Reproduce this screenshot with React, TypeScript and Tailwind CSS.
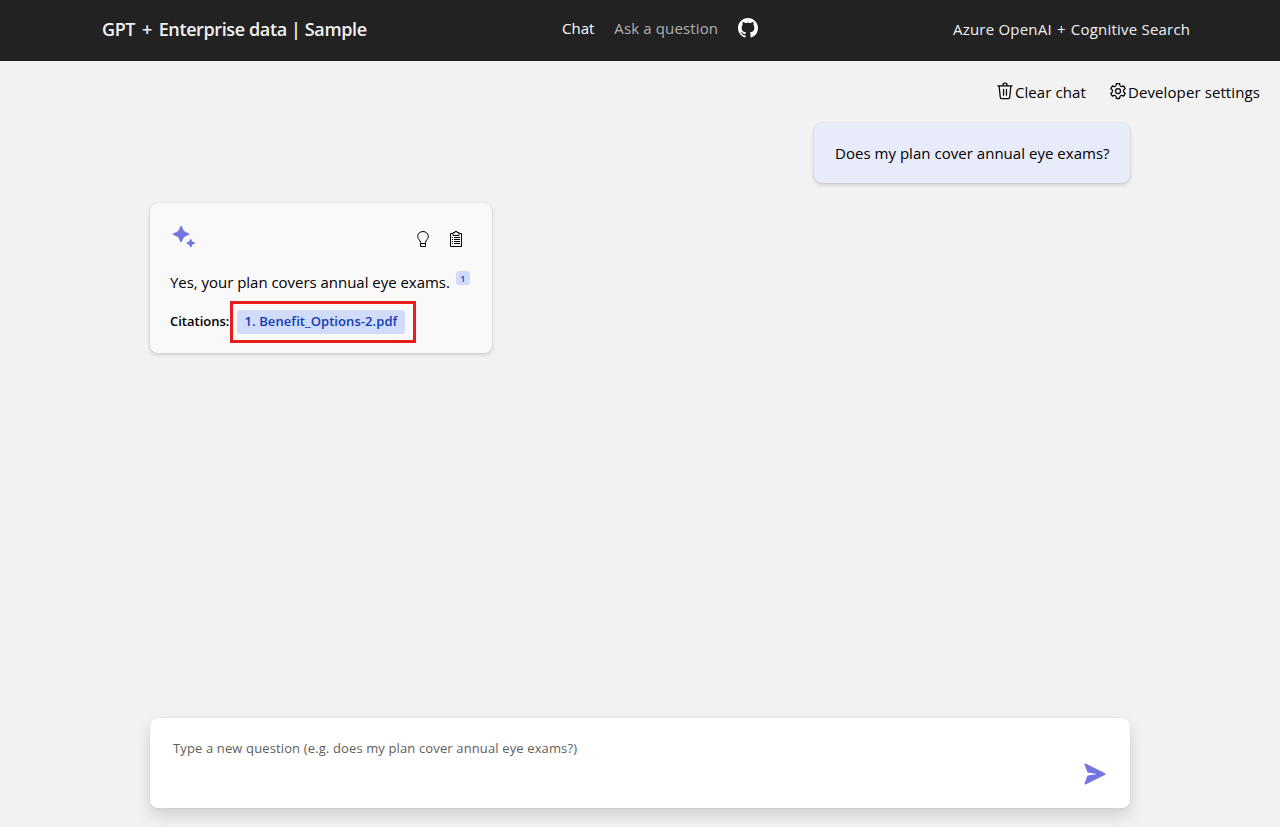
import type { ReactNode } from "react";

type IconProps = { className?: string };

function GithubIcon({ className }: IconProps) {
  return (
    <svg viewBox="0 0 16 16" fill="currentColor" className={className}>
      <path d="M8 0C3.58 0 0 3.58 0 8c0 3.54 2.29 6.53 5.47 7.59.4.07.55-.17.55-.38 0-.19-.01-.82-.01-1.49-2.01.37-2.53-.49-2.69-.94-.09-.23-.48-.94-.82-1.13-.28-.15-.68-.52-.01-.53.63-.01 1.08.58 1.23.82.72 1.21 1.87.87 2.33.66.07-.52.28-.87.51-1.07-1.78-.2-3.64-.89-3.64-3.95 0-.87.31-1.59.82-2.15-.08-.2-.36-1.02.08-2.12 0 0 .67-.21 2.2.82.64-.18 1.32-.27 2-.27s1.36.09 2 .27c1.53-1.04 2.2-.82 2.2-.82.44 1.1.16 1.92.08 2.12.51.56.82 1.27.82 2.15 0 3.07-1.87 3.75-3.65 3.95.29.25.54.73.54 1.48 0 1.07-.01 1.93-.01 2.2 0 .21.15.46.55.38A8.01 8.01 0 0 0 16 8c0-4.42-3.58-8-8-8Z" />
    </svg>
  );
}

function TrashIcon({ className }: IconProps) {
  return (
    <svg viewBox="0 0 24 24" fill="currentColor" className={className}>
      <path d="M12 1.75a3.25 3.25 0 0 1 3.245 3.066L15.25 5h5.25a.75.75 0 0 1 .102 1.493L20.5 6.5h-.796l-1.28 13.02a2.75 2.75 0 0 1-2.561 2.474l-.176.006H8.313a2.75 2.75 0 0 1-2.714-2.307l-.023-.174L4.295 6.5H3.5a.75.75 0 0 1-.743-.648L2.75 5.75a.75.75 0 0 1 .648-.743L3.5 5h5.25A3.25 3.25 0 0 1 12 1.75Zm6.197 4.75H5.802l1.267 12.872a1.25 1.25 0 0 0 1.117 1.122l.127.006h7.374c.6 0 1.109-.425 1.225-1.002l.02-.126L18.197 6.5ZM13.75 9.25a.75.75 0 0 1 .743.648L14.5 10v7a.75.75 0 0 1-1.493.102L13 17v-7a.75.75 0 0 1 .75-.75Zm-3.5 0a.75.75 0 0 1 .743.648L11 10v7a.75.75 0 0 1-1.493.102L9.5 17v-7a.75.75 0 0 1 .75-.75ZM12 3.25a1.75 1.75 0 0 0-1.744 1.606L10.25 5h3.5A1.75 1.75 0 0 0 12 3.25Z" />
    </svg>
  );
}

function GearIcon({ className }: IconProps) {
  return (
    <svg viewBox="0 0 24 24" fill="currentColor" className={className}>
      <path d="M12.012 2.25c.734.008 1.465.093 2.182.253a.75.75 0 0 1 .582.649l.17 1.527a1.384 1.384 0 0 0 1.927 1.116l1.401-.615a.75.75 0 0 1 .85.174 9.792 9.792 0 0 1 2.204 3.792.75.75 0 0 1-.271.825l-1.242.916a1.381 1.381 0 0 0 0 2.226l1.243.915a.75.75 0 0 1 .272.826 9.797 9.797 0 0 1-2.204 3.792.75.75 0 0 1-.848.175l-1.407-.617a1.38 1.38 0 0 0-1.926 1.114l-.169 1.526a.75.75 0 0 1-.572.647 9.518 9.518 0 0 1-4.406 0 .75.75 0 0 1-.572-.647l-.168-1.524a1.382 1.382 0 0 0-1.926-1.11l-1.406.616a.75.75 0 0 1-.849-.175 9.798 9.798 0 0 1-2.204-3.796.75.75 0 0 1 .272-.826l1.243-.916a1.38 1.38 0 0 0 0-2.226l-1.243-.914a.75.75 0 0 1-.271-.826 9.793 9.793 0 0 1 2.204-3.792.75.75 0 0 1 .85-.174l1.4.615a1.387 1.387 0 0 0 1.93-1.118l.17-1.526a.75.75 0 0 1 .583-.65c.717-.159 1.45-.243 2.201-.252Zm0 1.5a9.135 9.135 0 0 0-1.354.117l-.109.977A2.886 2.886 0 0 1 6.525 7.17l-.898-.394a8.293 8.293 0 0 0-1.348 2.317l.798.587a2.881 2.881 0 0 1 0 4.643l-.799.588c.32.842.776 1.626 1.348 2.322l.905-.397a2.882 2.882 0 0 1 4.017 2.318l.11.984c.889.15 1.798.15 2.687 0l.11-.984a2.881 2.881 0 0 1 4.018-2.322l.905.396a8.296 8.296 0 0 0 1.347-2.318l-.798-.588a2.881 2.881 0 0 1 0-4.643l.796-.587a8.293 8.293 0 0 0-1.348-2.317l-.896.392a2.884 2.884 0 0 1-4.023-2.324l-.11-.976a8.988 8.988 0 0 0-1.333-.117ZM12 8.25a3.75 3.75 0 1 1 0 7.5 3.75 3.75 0 0 1 0-7.5Zm0 1.5a2.25 2.25 0 1 0 0 4.5 2.25 2.25 0 0 0 0-4.5Z" />
    </svg>
  );
}

function SparkleIcon({ className }: IconProps) {
  return (
    <svg viewBox="0 0 24 24" fill="currentColor" className={className}>
      <path d="M8.2 1.6c.3-.9 1.5-.9 1.8 0l.9 2.4a5 5 0 0 0 3.300 3.300l2.400.900c.9.3.9 1.500 0 1.800l-2.400.900a5 5 0 0 0-3.300 3.300l-.9 2.400c-.3.9-1.5.9-1.8 0l-.9-2.400a5 5 0 0 0-3.300-3.300l-2.400-.900c-.9-.3-.9-1.500 0-1.800l2.400-.900a5 5 0 0 0 3.300-3.300Z" />
      <path d="M17.900 14.500c.2-.8 1.400-.8 1.600 0l.4 1.200c.2.6.6 1 1.200 1.200l1.200.4c.8.2.8 1.400 0 1.600l-1.200.4c-.6.2-1 .6-1.200 1.200l-.4 1.200c-.2.8-1.400.8-1.600 0l-.4-1.200c-.2-.6-.6-1-1.200-1.200l-1.200-.4c-.8-.2-.8-1.400 0-1.600l1.200-.4c.6-.2 1-.6 1.200-1.200Z" />
    </svg>
  );
}

function BulbIcon({ className }: IconProps) {
  return (
    <svg viewBox="0 0 16 16" fill="none" stroke="currentColor" className={className}>
      <path d="M5.5 12.500V11.500C5.500 9.200 2.700 8.300 2.700 5.500a5.300 5.000 0 0 1 10.600 0C13.300 8.300 10.500 9.200 10.500 11.500v4h-5v-3h5" />
    </svg>
  );
}

function ClipboardIcon({ className }: IconProps) {
  return (
    <svg viewBox="0 0 16 16" fill="none" stroke="currentColor" className={className}>
      <path d="M5 2.500H2.500v13h11v-13H11M5 4.500v-3h2V.500h2v1h2v3zM4 6.500h1M6 6.500h6M4 8.500h1M6 8.500h6M4 10.500h1M6 10.500h6M4 12.500h1M6 12.500h6" />
    </svg>
  );
}

function SendIcon({ className }: IconProps) {
  return (
    <svg viewBox="0 0 24 24" fill="currentColor" className={className}>
      <path d="m12.815 12.197-7.532 1.256a.5.5 0 0 0-.386.318L2.3 20.728c-.248.64.421 1.25 1.035.943l18-9a.75.75 0 0 0 0-1.342l-18-9c-.614-.307-1.283.303-1.035.943l2.598 6.957a.5.5 0 0 0 .386.318l7.532 1.255a.2.2 0 0 1 0 .395Z" />
    </svg>
  );
}

function ActionButton({ icon, children }: { icon: ReactNode; children: ReactNode }) {
  return (
    <button className="flex items-center whitespace-nowrap text-[15px] leading-5 tracking-[0.1px]">
      {icon}
      {children}
    </button>
  );
}

export default function App() {
  return (
    <div className="flex h-[827px] w-[1280px] flex-col overflow-hidden bg-[#f2f2f2] font-['Open_Sans','Noto_Sans',sans-serif] text-[15px] text-black">
      <header className="flex h-[61px] shrink-0 items-center bg-[#222222] text-[#f2f2f2]">
        <h1 className="ml-[102px] w-[460px] whitespace-nowrap pb-0.5 text-[18px] font-semibold tracking-[-0.38px]">
          GPT <span className="mx-[2.5px]">+</span> Enterprise data | Sample
        </h1>
        <nav className="flex w-[391px] items-center pb-1">
          <a className="mr-5 whitespace-nowrap text-white">Chat</a>
          <a className="mr-5 whitespace-nowrap tracking-[0.13px] text-[#b1b1b1]">Ask a question</a>
          <GithubIcon className="mb-0.5 size-5 text-white" />
        </nav>
        <p className="whitespace-nowrap pb-0.5 tracking-[0.21px]">
          Azure OpenAI <span className="mx-[1px]">+</span> Cognitive Search
        </p>
      </header>

      <main className="flex grow flex-col">
        <div className="flex h-[62px] items-center justify-end gap-[22px] pr-5">
          <ActionButton icon={<TrashIcon className="mb-0.5 size-5" />}>Clear chat</ActionButton>
          <ActionButton icon={<GearIcon className="mb-0.5 size-5" />}>Developer settings</ActionButton>
        </div>

        <div className="mx-[150px] flex grow flex-col">
          <div className="flex h-[60px] w-[316px] items-center self-end rounded-lg bg-[#e8ebfa] pl-[21px] shadow-[0_2px_4px_rgba(0,0,0,0.14),0_0_2px_rgba(0,0,0,0.12)]">
            <span className="whitespace-nowrap tracking-[0.03px]">Does my plan cover annual eye exams?</span>
          </div>

          <section className="mt-5 flex h-[150px] w-[342px] flex-col rounded-lg bg-[#f9f9f9] px-5 shadow-[0_2px_4px_rgba(0,0,0,0.14),0_0_2px_rgba(0,0,0,0.12)]">
            <div className="flex h-[66px] items-start pt-[22px]">
              <SparkleIcon className="ml-0.5 size-6 text-[#7376e1]" />
              <BulbIcon className="ml-[219px] mt-1.5 size-4" />
              <ClipboardIcon className="ml-[17px] mt-1.5 size-4" />
            </div>
            <p className="flex h-[27px] items-center whitespace-nowrap tracking-[-0.03px]">
              Yes, your plan covers annual eye exams.
              <sup className="mb-2 ml-1.5 flex size-[14px] translate-y-1 items-center justify-center rounded-[3px] bg-[#d1dbfa] text-[9px] font-semibold leading-none text-[#123bb6]">
                1
              </sup>
            </p>
            <div className="mt-[5px] flex h-[42px] items-center text-[13px] font-semibold">
              <span className="w-[60px] whitespace-nowrap">Citations:</span>
              <div className="flex h-[42px] w-[186px] items-center border-[3px] border-[#e91c1c] pl-1">
                <a className="flex h-6 w-[168px] items-center justify-center whitespace-nowrap rounded bg-[#d1dbfa] tracking-[0.08px] text-[#123bb6]">
                  1. Benefit_Options-2.pdf
                </a>
              </div>
            </div>
          </section>

          <div className="mb-[19px] mt-auto flex h-[90px] rounded-lg bg-white shadow-[0_8px_16px_rgba(0,0,0,0.14),0_0_2px_rgba(0,0,0,0.12)]">
            <p className="ml-[23px] mt-5 grow whitespace-nowrap text-[13px] leading-5 tracking-[0.13px] text-[#605e5c]">
              Type a new question (e.g. does my plan cover annual eye exams?)
            </p>
            <SendIcon className="mr-[22px] mt-[43px] size-[26px] text-[#7376e1]" />
          </div>
        </div>
      </main>
    </div>
  );
}
